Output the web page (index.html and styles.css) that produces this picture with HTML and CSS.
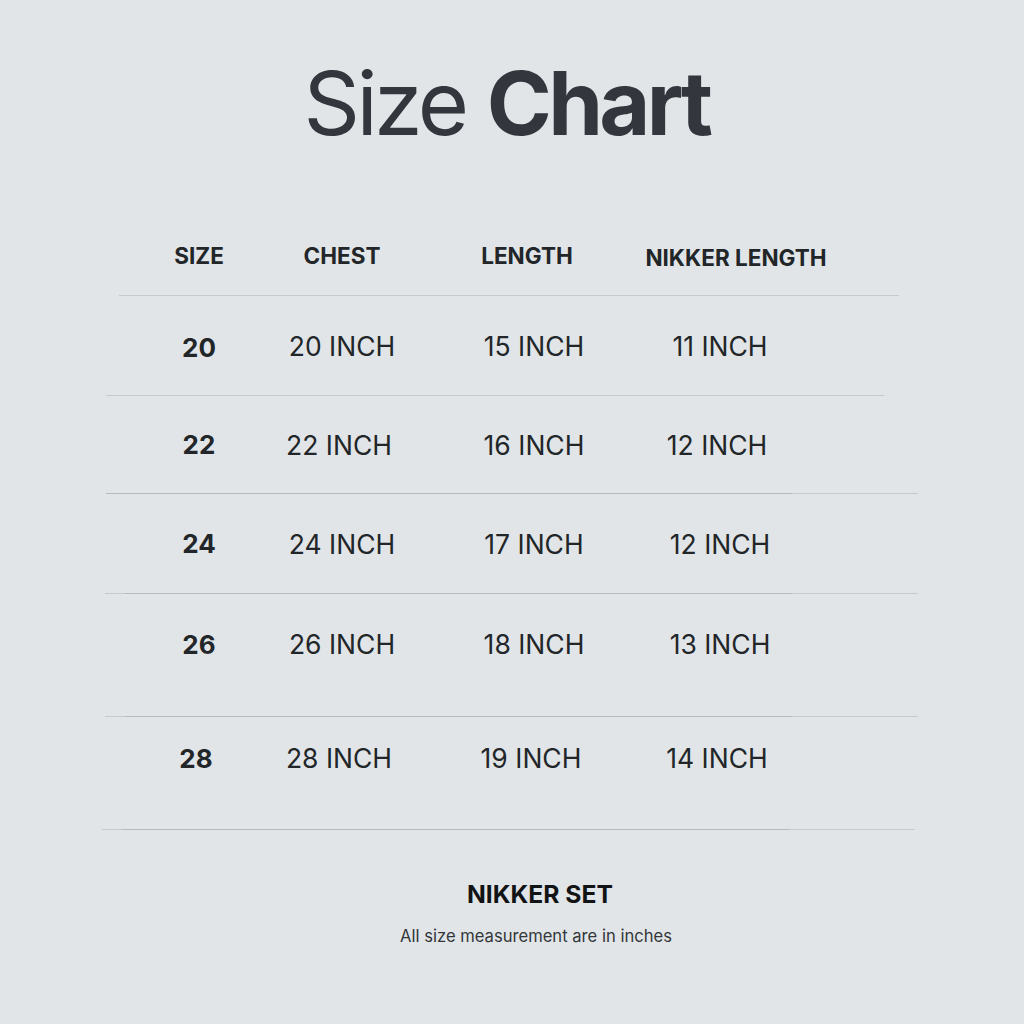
FILE: index.html
```html
<!DOCTYPE html>
<html>
<head>
<meta charset="utf-8">
<link rel="stylesheet" href="styles.css">
</head>
<body>
<div class="page">
  <h1 class="title"><span class="light">Size</span> <span class="bold">Chart</span></h1>
  <div class="table">
    <div class="row head">
      <div class="c c1">SIZE</div>
      <div class="c c2">CHEST</div>
      <div class="c c3 h3">LENGTH</div>
      <div class="c c4 h4">NIKKER LENGTH</div>
    </div>
    <div class="rule r0"></div>
    <div class="row r-a">
      <div class="c c1 num">20</div>
      <div class="c c2">20 INCH</div>
      <div class="c c3">15 INCH</div>
      <div class="c c4">11 INCH</div>
    </div>
    <div class="rule r1"></div>
    <div class="row r-b">
      <div class="c c1 num">22</div>
      <div class="c c2 sh">22 INCH</div>
      <div class="c c3">16 INCH</div>
      <div class="c c4 sh">12 INCH</div>
    </div>
    <div class="rule r2"></div>
    <div class="row r-c">
      <div class="c c1 num">24</div>
      <div class="c c2">24 INCH</div>
      <div class="c c3">17 INCH</div>
      <div class="c c4">12 INCH</div>
    </div>
    <div class="rule r3"></div>
    <div class="row r-d">
      <div class="c c1 num">26</div>
      <div class="c c2">26 INCH</div>
      <div class="c c3">18 INCH</div>
      <div class="c c4">13 INCH</div>
    </div>
    <div class="rule r4"></div>
    <div class="row r-e">
      <div class="c c1 num sh">28</div>
      <div class="c c2 sh">28 INCH</div>
      <div class="c c3 sh">19 INCH</div>
      <div class="c c4 sh">14 INCH</div>
    </div>
    <div class="rule r5"></div>
  </div>
  <div class="foot">
    <div class="set">NIKKER SET</div>
    <div class="note">All size measurement are in inches</div>
  </div>
</div>
</body>
</html>
```

FILE: styles.css
```css
html, body {
  margin: 0;
  padding: 0;
  background: #e1e5e8;
}
body {
  font-family: Inter, "Noto Sans", sans-serif;
  color: #222629;
  width: 1024px;
  height: 1024px;
  overflow: hidden;
}
.page {
  padding-top: 53px;
}
.title {
  margin: 0;
  font-size: 88px;
  line-height: 100px;
  text-align: center;
  color: #33373d;
  letter-spacing: -3.6px;
  font-weight: 400;
  padding-right: 11px;
}
.title .bold { font-weight: 700; }
.table {
  margin-top: 63px;
}
.row {
  display: grid;
  grid-template-columns: 142px 144px 226px 192px;
  margin-left: 128px;
  align-items: center;
  font-size: 26.5px;
}
.c {
  text-align: center;
  white-space: nowrap;
}
.c3 { padding-left: 14px; }
.c4 { padding-right: 32px; }
.head {
  height: 79px;
  font-size: 22.5px;
  font-weight: 700;
  letter-spacing: 0;
}
.head .h3 { padding-left: 0; }
.head .h4 { padding-right: 0; padding-top: 4px; }
.num { font-weight: 700; font-size: 26px; }
.r-a { height: 99px; }
.r-b { height: 97px; }
.r-c { height: 99px; }
.r-d { height: 122px; padding-bottom: 22px; box-sizing: border-box; }
.r-e { height: 112px; padding-bottom: 30px; box-sizing: border-box; }
.sh { padding-top: 0; }
.r-a .num { padding-top: 4px; }
.r-b .c2 { padding-right: 6px; }
.r-b .c4 { padding-right: 38px; }
.r-e .c1 { padding-right: 6px; }
.r-e .c2 { padding-right: 6px; }
.r-e .c3 { padding-left: 8px; }
.r-e .c4 { padding-right: 38px; }
.rule {
  height: 1px;
  background: #c6cacd;
}
.r0 { margin-left: 119px; width: 780px; }
.r1 { margin-left: 106px; width: 778px; }
.r2 { margin-left: 106px; width: 812px; background: linear-gradient(to right, #b6babd 0, #b6babd 686px, #c6cacd 686px); }
.r3 { margin-left: 105px; width: 813px; background: linear-gradient(to right, #c6cacd 0, #c6cacd 20px, #b6babd 20px, #b6babd 687px, #c6cacd 687px); }
.r4 { margin-left: 105px; width: 813px; background: linear-gradient(to right, #c6cacd 0, #c6cacd 20px, #b6babd 20px, #b6babd 687px, #c6cacd 687px); }
.r5 { margin-left: 102px; width: 813px; background: linear-gradient(to right, #c6cacd 0, #c6cacd 20px, #b6babd 20px, #b6babd 687px, #c6cacd 687px); }
.foot {
  text-align: center;
  padding-left: 56px;
}
.set {
  margin-top: 49px;
  font-size: 24.7px;
  font-weight: 700;
  color: #111315;
  line-height: 30px;
}
.note {
  margin-top: 17px;
  font-size: 16.6px;
  color: #33373a;
  line-height: 20px;
  padding-right: 8px;
}
```
